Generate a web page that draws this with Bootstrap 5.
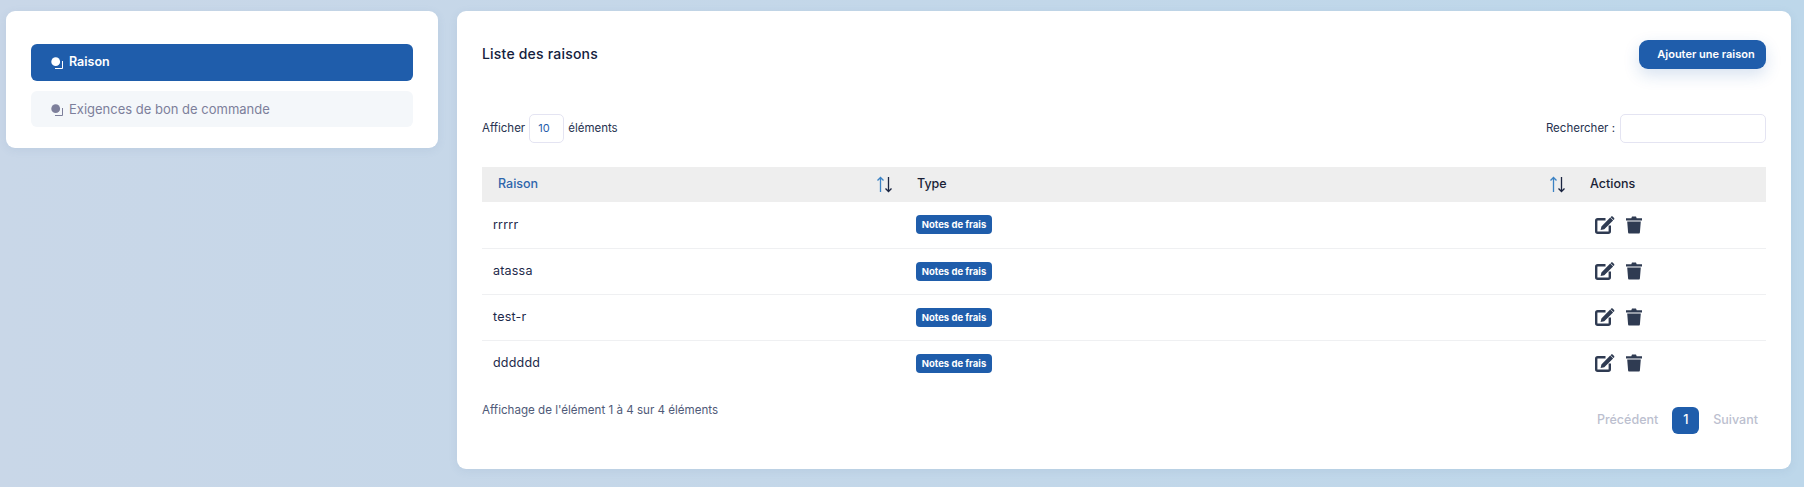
<!DOCTYPE html>
<html lang="fr"><head><meta charset="utf-8"><title>Raisons</title>
<link href="https://cdn.jsdelivr.net/npm/bootstrap@5.3.0/dist/css/bootstrap.min.css" rel="stylesheet">
<style>
html,body{height:487px;overflow:hidden}
body{font-family:Inter,"Noto Sans",sans-serif;font-size:13px;color:#1d2a4a;background:linear-gradient(90deg,#c9d7e8,#bdd7ea)}
.shell{padding:11px 13px 18px 6px;gap:19px;height:487px;align-items:flex-start}
.panel{background:#fff;border-radius:9px;box-shadow:0 2px 8px rgba(100,130,170,.12)}
.side{width:432px;height:137px;padding:33px 25px 21px;flex:none}
.menu-item{height:37px;border-radius:6px;padding:0 20px;gap:6px;font-size:12.5px;font-weight:500}
.menu-item.on{background:#1f5dab;color:#fff;font-weight:600}
.menu-item.off{background:#f4f7fa;color:#7d7f9b;height:36px;margin-top:10px;font-weight:400;font-size:13px;padding-top:1px}
.menu-item svg{flex:none}
.main{flex:1;height:458px;padding:28px 25px 0 25px;display:flex;flex-direction:column}
.ttl{font-size:14px;font-weight:500;color:#14213d;margin:0;letter-spacing:.2px}
.addbtn{width:127px;height:29px;background:#1f5dab;color:#fff;font-size:11px;font-weight:600;border-radius:9px;border:0;box-shadow:0 6px 16px rgba(31,93,171,.18);padding:0 0 0 7px;margin-top:1px}
.bar{margin-top:45px;height:29px;font-size:11.5px;color:#27324f}
.lenbox{width:35px;height:29px;border:1px solid #e4e4f2;border-radius:5px;font-size:11px;color:#1f5dab;padding-left:8px;margin:0 4px}
.findbox{width:146px;height:29px;border:1px solid #e4e4f2;border-radius:5px;margin-left:5px;background:#fff}
.tbl{margin:24px 0 0;table-layout:fixed;width:100%;--bs-table-border-color:#eff0f2}
.tbl th{background:#eee;height:35px;padding:0 0 1px 10px;font-size:12.5px;font-weight:500;vertical-align:middle;border:0;color:#1a1f36}
.tbl th.first{padding-left:16px;color:#2f66ac}
.tbl td{height:46px;padding:1px 0 0 11px;vertical-align:middle;color:#1d2a4a;font-size:12.5px;letter-spacing:.2px}
.tbl td+td{padding:0 0 0 10px}
.tbl tr:last-child td{border-bottom:0}
.tag{background:#1f5dab;color:#fff;font-size:9.5px;font-weight:700;border-radius:4px;height:19px;line-height:19px;display:inline-block;width:76px;text-align:center;white-space:nowrap;letter-spacing:0;margin-left:-1px}
.foot{margin-top:10px;align-items:flex-start}
.info{font-size:11.6px;color:#4f5a78;margin-top:6px}
.pager{gap:14px;font-size:12.5px;font-weight:500;color:#bcbfcf;margin-right:8px;margin-top:11px}
.cur{width:27px;height:27px;border-radius:6px;background:#1f5dab;color:#fff}
.acts{gap:11px;margin-left:5px}
.sort{margin-right:14px;flex:none}
</style></head><body>
<div class="d-flex shell">
 <div class="panel side">
  <div class="d-flex align-items-center menu-item on">
   <svg width="12" height="12" viewBox="0 0 12 12"><path d="M4 11.500h7.500V4" fill="none" stroke="currentColor" stroke-width="1"/><circle cx="4.700" cy="4.700" r="4.400" fill="currentColor"/></svg><span>Raison</span></div>
  <div class="d-flex align-items-center menu-item off">
   <svg width="12" height="12" viewBox="0 0 12 12"><path d="M4 11.500h7.500V4" fill="none" stroke="currentColor" stroke-width="1"/><circle cx="4.700" cy="4.700" r="4.400" fill="currentColor"/></svg><span>Exigences de bon de commande</span></div>
 </div>
 <div class="panel main">
  <div class="d-flex justify-content-between align-items-center"><h1 class="ttl">Liste des raisons</h1><button class="addbtn">Ajouter une raison</button></div>
  <div class="d-flex justify-content-between align-items-center bar">
   <div class="d-flex align-items-center">Afficher<div class="d-flex align-items-center lenbox">10</div>éléments</div>
   <div class="d-flex align-items-center">Rechercher :<div class="findbox"></div></div>
  </div>
  <table class="table tbl">
   <colgroup><col style="width:425px"><col style="width:673px"><col></colgroup>
   <thead><tr>
    <th class="first"><div class="d-flex justify-content-between align-items-center"><span>Raison</span><svg class="sort" width="17" height="17" viewBox="0 0 17 17" fill="none" stroke-width="1.300"><path d="M4.500 16V1.500M1.500 4.500l3-3 3 3" stroke="#3b82c4"/><path d="M12.500 1v14.500M9.500 12.500l3 3 3-3" stroke="#1a2440"/></svg></div></th>
    <th><div class="d-flex justify-content-between align-items-center"><span>Type</span><svg class="sort" width="17" height="17" viewBox="0 0 17 17" fill="none" stroke-width="1.300"><path d="M4.500 16V1.500M1.500 4.500l3-3 3 3" stroke="#3b82c4"/><path d="M12.500 1v14.500M9.500 12.500l3 3 3-3" stroke="#1a2440"/></svg></div></th>
    <th>Actions</th>
   </tr></thead>
   <tbody id="rows"></tbody>
  </table>
  <div class="d-flex justify-content-between foot">
   <div class="info">Affichage de l'élément 1 à 4 sur 4 éléments</div>
   <div class="d-flex align-items-center pager"><span>Précédent</span><div class="d-flex align-items-center justify-content-center cur">1</div><span>Suivant</span></div>
  </div>
 </div>
</div>
<script>
var edit='<svg width="20" height="18" viewBox="0 0 20 18"><path d="M10.500 3.200H2.700C1.900 3.200 1.200 3.900 1.200 4.700v10.600c0 .8.700 1.500 1.500 1.500h10.600c.8 0 1.500-.7 1.500-1.500V9.500" fill="none" stroke="#2f3b52" stroke-width="2.400"/><path d="M15.200 1.600l2.900 2.900L9.300 13.300l-3.700.8.800-3.700zM16.200.6c.4-.4 1-.4 1.400 0l1.500 1.500c.4.4.4 1 0 1.400l-.6.6-2.900-2.900z" fill="#2f3b52"/></svg>';
var del='<svg width="16" height="18" viewBox="0 0 16 18"><path d="M0 2.300h5.300L6 .4h4l.7 1.900H16v2.200H0zM1.200 5.600h13.600l-.9 11c0 .5-.5 1-1 1H3.100c-.5 0-1-.5-1-1z" fill="#2f3b52"/></svg>';
document.getElementById('rows').innerHTML=['rrrrr','atassa','test-r','dddddd'].map(function(n){return '<tr><td>'+n+'</td><td><span class="tag">Notes de frais</span></td><td><div class="d-flex align-items-center acts">'+edit+del+'</div></td></tr>'}).join('');
</script>
</body></html>
